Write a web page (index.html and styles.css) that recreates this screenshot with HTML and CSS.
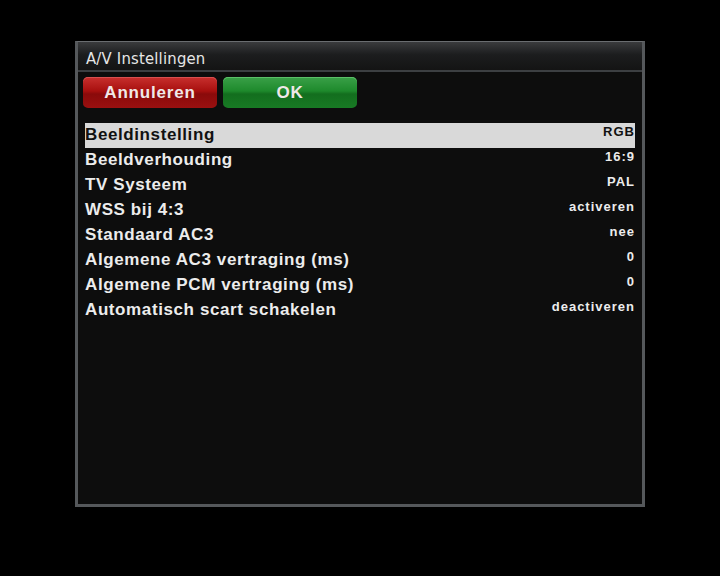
FILE: index.html
```html
<!DOCTYPE html>
<html lang="nl">
<head>
  <meta charset="UTF-8" />
  <title>A/V Instellingen</title>
  <link rel="stylesheet" href="styles.css">
</head>
<body>
  <div class="window">
    <div class="titlebar">A/V Instellingen</div>
    <div class="content">
      <div class="buttons">
        <div class="btn btn-red">Annuleren</div>
        <div class="btn btn-green">OK</div>
      </div>
      <div class="list">
        <div class="row selected"><span class="label">Beeldinstelling</span><span class="value">RGB</span></div>
        <div class="row"><span class="label">Beeldverhouding</span><span class="value">16:9</span></div>
        <div class="row"><span class="label">TV Systeem</span><span class="value">PAL</span></div>
        <div class="row"><span class="label">WSS bij 4:3</span><span class="value">activeren</span></div>
        <div class="row"><span class="label">Standaard AC3</span><span class="value">nee</span></div>
        <div class="row"><span class="label">Algemene AC3 vertraging (ms)</span><span class="value">0</span></div>
        <div class="row"><span class="label">Algemene PCM vertraging (ms)</span><span class="value">0</span></div>
        <div class="row"><span class="label">Automatisch scart schakelen</span><span class="value">deactiveren</span></div>
      </div>
    </div>
  </div>
</body>
</html>
```

FILE: styles.css
```css
html, body {
  margin: 0;
  padding: 0;
  background: #000;
}
body {
  width: 720px;
  height: 576px;
  font-family: "Liberation Sans", Arial, sans-serif;
}
.window {
  position: relative;
  top: 41px;
  left: 75px;
  width: 564px;
  height: 462px;
  border: 3px solid #55585b;
  border-top: 1px solid #6a6d70;
  background: #0d0d0d;
  display: flex;
  flex-direction: column;
}
.titlebar {
  height: 28px;
  padding-left: 8px;
  line-height: 33px;
  font-family: "DejaVu Sans Condensed", "DejaVu Sans", sans-serif;
  font-size: 16.5px;
  letter-spacing: 0.2px;
  color: #e6e6e6;
  background: linear-gradient(#3a3b3d, #1c1d1e 45%, #141414);
  border-bottom: 2px solid #3c3f42;
}
.content {
  flex: 1;
  padding: 5px 6px 0 5px;
}
.buttons {
  display: flex;
  gap: 6px;
}
.btn {
  width: 134px;
  height: 31px;
  border-radius: 5px;
  font-weight: bold;
  font-size: 17px;
  letter-spacing: 0.8px;
  color: #f0e8e8;
  text-align: center;
  line-height: 32px;
}
.btn-red {
  background: linear-gradient(#c8302e, #a8100f 45%, #8a0a0a 55%, #9a1010);
  box-shadow: inset 0 1px 0 #d85050;
}
.btn-green {
  background: linear-gradient(#3aa048, #1e8a2c 45%, #136e1e 55%, #187a24);
  box-shadow: inset 0 1px 0 #5cc068;
}
.list {
  margin-top: 15px;
  margin-left: 2px;
  width: 550px;
}
.row {
  display: flex;
  justify-content: space-between;
  height: 25px;
  color: #ececec;
}
.row.selected {
  background: #d9d9d9;
  color: #111;
}
.label {
  font-weight: bold;
  font-size: 17px;
  letter-spacing: 0.6px;
  line-height: 23px;
}
.value {
  font-weight: bold;
  font-size: 13px;
  letter-spacing: 1px;
  line-height: 17px;
}
```
